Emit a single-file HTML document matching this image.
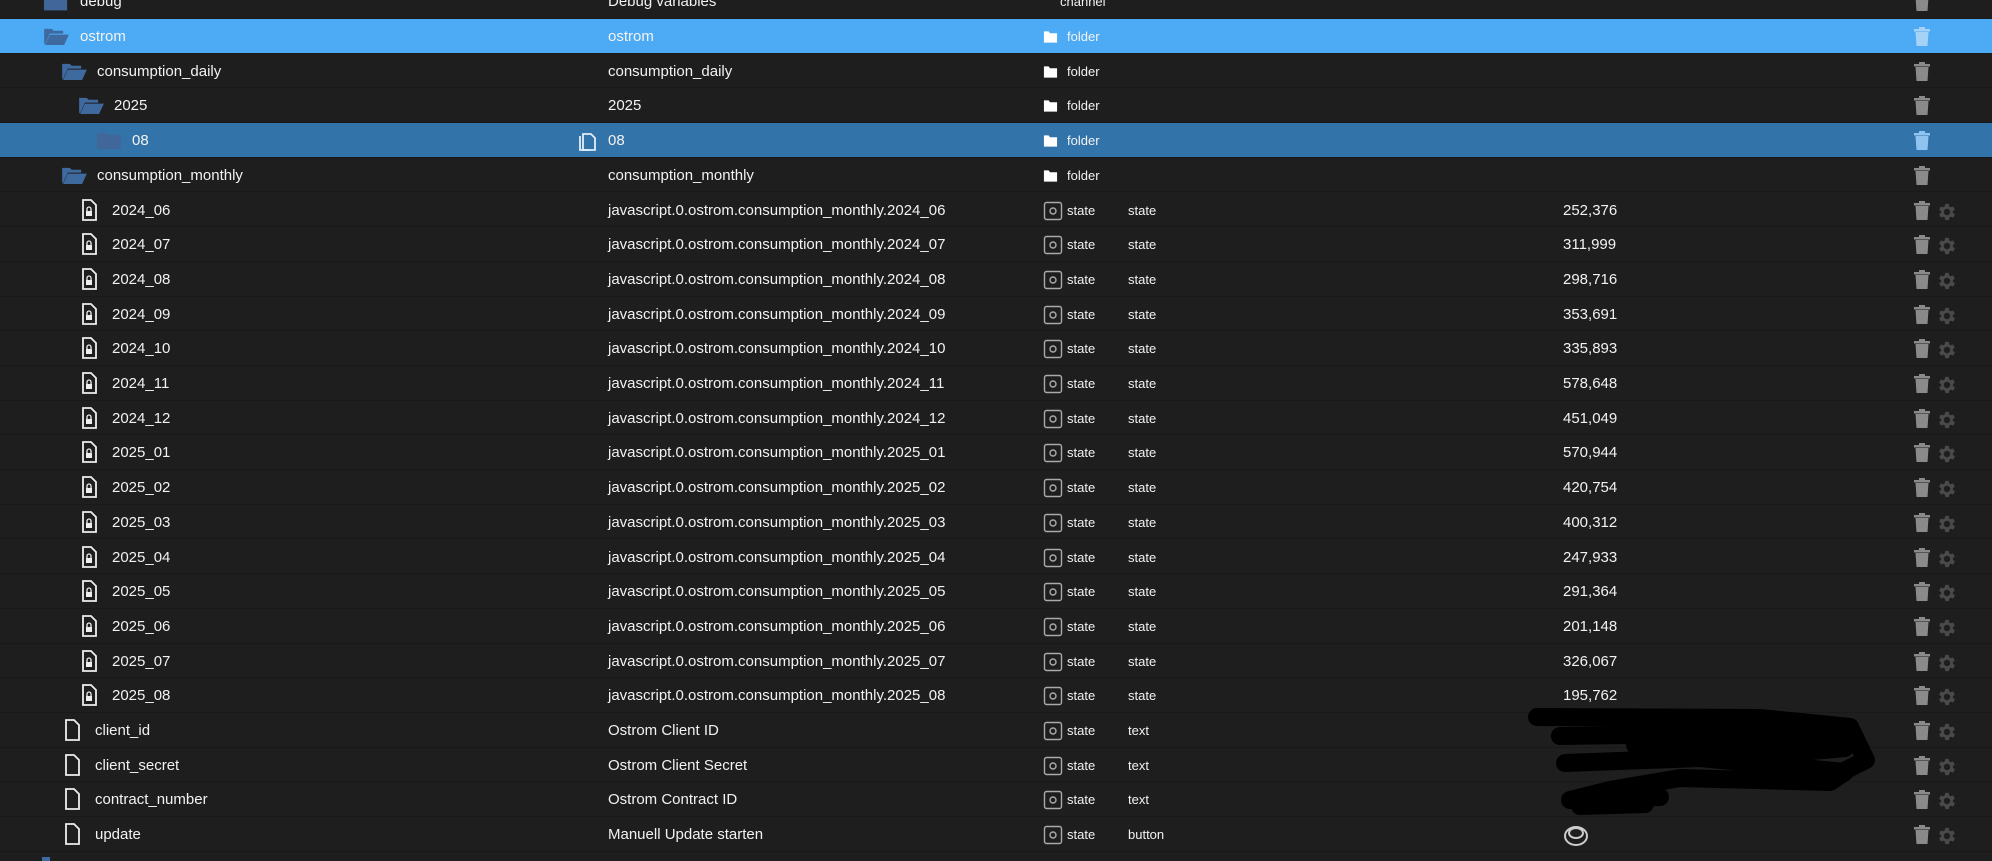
<!DOCTYPE html>
<html><head><meta charset="utf-8"><style>
html,body{margin:0;padding:0;background:#1e1e1e;width:1992px;height:861px;overflow:hidden;font-family:"Liberation Sans",sans-serif;color:#f2f2f2}
.r{position:absolute;left:0;width:1992px;height:34.7px;box-sizing:border-box;border-bottom:1px solid #191919;font-size:15px}
.r span,.r svg{position:absolute}
.t{top:9px;line-height:18px;white-space:nowrap}
.c2{left:608px}
.ti{left:1043px;top:8px}
.tt{left:1067px;font-size:13px}
.ro{left:1128px;font-size:13px}
.v{left:1563px}
.tr{left:1913px;top:8px}
.gr{left:1936px;top:8px}
.sel1{background:#4dabf5}
.sel2{background:#3273a9}
</style></head><body>
<svg width="0" height="0" style="position:absolute">
<defs>
<symbol id="fo" viewBox="0 0 28 20"><path d="M1 2h8l2 2h10v3H7L2 18H1z" fill="#3f6aa0"/><path d="M7 8h20l-5 11H2z" fill="#3f6aa0"/></symbol>
<symbol id="fc" viewBox="0 0 28 20"><path d="M1 2h8l2 2h15v15H1z" fill="#41679a"/></symbol>
<symbol id="ff" viewBox="0 0 16 16"><path d="M1 2h5l1.5 2H15v10H1z" fill="#fff"/></symbol>
<symbol id="st" viewBox="0 0 20 20"><rect x="1.5" y="1.5" width="17" height="17" rx="2" fill="none" stroke="#aaa" stroke-width="1.4"/><circle cx="10" cy="10" r="3" fill="none" stroke="#aaa" stroke-width="1.4"/></symbol>
<symbol id="fl" viewBox="0 0 16 22"><path d="M2 1h8l5 5v15H2z" fill="none" stroke="#eee" stroke-width="1.8"/><rect x="5" y="12" width="6" height="5" fill="#eee"/><path d="M6 12V10a2 2 0 0 1 4 0v2" fill="none" stroke="#eee" stroke-width="1.3"/></symbol>
<symbol id="fe" viewBox="0 0 16 22"><path d="M2 1h8l5 5v15H2z" fill="none" stroke="#eee" stroke-width="1.8"/></symbol>
<symbol id="tb" viewBox="0 0 18 20"><rect x="1" y="2" width="16" height="2.5" fill="currentColor"/><rect x="6" y="0" width="6" height="2" fill="currentColor"/><path d="M2.5 5h13l-1 14h-11z" fill="currentColor"/></symbol>
<symbol id="gg" viewBox="0 0 24 24"><path fill="#4a4a4a" d="M19.4 13a7.5 7.5 0 0 0 0-2l2.1-1.6-2-3.5-2.5 1a7 7 0 0 0-1.7-1L15 3.2h-4l-.4 2.7a7 7 0 0 0-1.7 1l-2.5-1-2 3.5L6.6 11a7.5 7.5 0 0 0 0 2l-2.1 1.6 2 3.5 2.5-1a7 7 0 0 0 1.7 1l.4 2.7h4l.4-2.7a7 7 0 0 0 1.7-1l2.5 1 2-3.5zM13 15.5a3.5 3.5 0 1 1 0-7 3.5 3.5 0 0 1 0 7z" transform="translate(-1 0)"/></symbol>
<symbol id="cp" viewBox="0 0 20 22"><path d="M6 4h8l4 4v12H6z" fill="none" stroke="#dfeefa" stroke-width="1.8"/><path d="M3 6v14h10" fill="none" stroke="#dfeefa" stroke-width="1.8"/></symbol>
</defs></svg>

<div class="r" style="top:-15.7px"><svg style="left:43px;top:8px" width="26" height="20"><use href="#fc"/></svg><span class="t" style="left:80px">debug</span><span class="t c2">Debug variables</span><span class="t tt" style="left:1060px">channel</span><svg class="tr" width="18" height="20" style="color:#8a8a8a"><use href="#tb"/></svg></div>

<div class="r sel1" style="top:19px"><svg style="left:43px;top:8px" width="27" height="19"><use href="#fo"/></svg><span class="t" style="left:80px">ostrom</span><span class="t c2">ostrom</span><svg class="ti" width="15" height="16" style="top:10px"><use href="#ff"/></svg><span class="t tt">folder</span><svg class="tr" width="18" height="20" style="color:#a6d2f7"><use href="#tb"/></svg></div>

<div class="r" style="top:53.7px"><svg style="left:61px;top:8px" width="27" height="19"><use href="#fo"/></svg><span class="t" style="left:97px">consumption_daily</span><span class="t c2">consumption_daily</span><svg class="ti" width="15" height="16" style="top:10px"><use href="#ff"/></svg><span class="t tt">folder</span><svg class="tr" width="18" height="20" style="color:#8a8a8a"><use href="#tb"/></svg></div>

<div class="r" style="top:88.4px"><svg style="left:78px;top:8px" width="27" height="19"><use href="#fo"/></svg><span class="t" style="left:114px">2025</span><span class="t c2">2025</span><svg class="ti" width="15" height="16" style="top:10px"><use href="#ff"/></svg><span class="t tt">folder</span><svg class="tr" width="18" height="20" style="color:#8a8a8a"><use href="#tb"/></svg></div>

<div class="r sel2" style="top:123.1px"><svg style="left:96px;top:8px" width="27" height="19"><use href="#fc"/></svg><span class="t" style="left:132px">08</span><svg style="left:577px;top:7px" width="20" height="22"><use href="#cp"/></svg><span class="t c2">08</span><svg class="ti" width="15" height="16" style="top:10px"><use href="#ff"/></svg><span class="t tt">folder</span><svg class="tr" width="18" height="20" style="color:#8fc4f0"><use href="#tb"/></svg></div>

<div class="r" style="top:157.8px"><svg style="left:61px;top:8px" width="27" height="19"><use href="#fo"/></svg><span class="t" style="left:97px">consumption_monthly</span><span class="t c2">consumption_monthly</span><svg class="ti" width="15" height="16" style="top:10px"><use href="#ff"/></svg><span class="t tt">folder</span><svg class="tr" width="18" height="20" style="color:#8a8a8a"><use href="#tb"/></svg></div>

<div class="r" style="top:192.5px"><svg style="left:81px;top:6px" width="16" height="22"><use href="#fl"/></svg><span class="t" style="left:112px">2024_06</span><span class="t c2">javascript.0.ostrom.consumption_monthly.2024_06</span><svg class="ti" width="20" height="20"><use href="#st"/></svg><span class="t tt">state</span><span class="t ro">state</span><span class="t v">252,376</span><svg class="tr" width="18" height="20" style="color:#8a8a8a"><use href="#tb"/></svg><svg class="gr" width="22" height="22"><use href="#gg"/></svg></div>
<div class="r" style="top:227.2px"><svg style="left:81px;top:6px" width="16" height="22"><use href="#fl"/></svg><span class="t" style="left:112px">2024_07</span><span class="t c2">javascript.0.ostrom.consumption_monthly.2024_07</span><svg class="ti" width="20" height="20"><use href="#st"/></svg><span class="t tt">state</span><span class="t ro">state</span><span class="t v">311,999</span><svg class="tr" width="18" height="20" style="color:#8a8a8a"><use href="#tb"/></svg><svg class="gr" width="22" height="22"><use href="#gg"/></svg></div>
<div class="r" style="top:261.9px"><svg style="left:81px;top:6px" width="16" height="22"><use href="#fl"/></svg><span class="t" style="left:112px">2024_08</span><span class="t c2">javascript.0.ostrom.consumption_monthly.2024_08</span><svg class="ti" width="20" height="20"><use href="#st"/></svg><span class="t tt">state</span><span class="t ro">state</span><span class="t v">298,716</span><svg class="tr" width="18" height="20" style="color:#8a8a8a"><use href="#tb"/></svg><svg class="gr" width="22" height="22"><use href="#gg"/></svg></div>
<div class="r" style="top:296.6px"><svg style="left:81px;top:6px" width="16" height="22"><use href="#fl"/></svg><span class="t" style="left:112px">2024_09</span><span class="t c2">javascript.0.ostrom.consumption_monthly.2024_09</span><svg class="ti" width="20" height="20"><use href="#st"/></svg><span class="t tt">state</span><span class="t ro">state</span><span class="t v">353,691</span><svg class="tr" width="18" height="20" style="color:#8a8a8a"><use href="#tb"/></svg><svg class="gr" width="22" height="22"><use href="#gg"/></svg></div>
<div class="r" style="top:331.3px"><svg style="left:81px;top:6px" width="16" height="22"><use href="#fl"/></svg><span class="t" style="left:112px">2024_10</span><span class="t c2">javascript.0.ostrom.consumption_monthly.2024_10</span><svg class="ti" width="20" height="20"><use href="#st"/></svg><span class="t tt">state</span><span class="t ro">state</span><span class="t v">335,893</span><svg class="tr" width="18" height="20" style="color:#8a8a8a"><use href="#tb"/></svg><svg class="gr" width="22" height="22"><use href="#gg"/></svg></div>
<div class="r" style="top:366px"><svg style="left:81px;top:6px" width="16" height="22"><use href="#fl"/></svg><span class="t" style="left:112px">2024_11</span><span class="t c2">javascript.0.ostrom.consumption_monthly.2024_11</span><svg class="ti" width="20" height="20"><use href="#st"/></svg><span class="t tt">state</span><span class="t ro">state</span><span class="t v">578,648</span><svg class="tr" width="18" height="20" style="color:#8a8a8a"><use href="#tb"/></svg><svg class="gr" width="22" height="22"><use href="#gg"/></svg></div>
<div class="r" style="top:400.7px"><svg style="left:81px;top:6px" width="16" height="22"><use href="#fl"/></svg><span class="t" style="left:112px">2024_12</span><span class="t c2">javascript.0.ostrom.consumption_monthly.2024_12</span><svg class="ti" width="20" height="20"><use href="#st"/></svg><span class="t tt">state</span><span class="t ro">state</span><span class="t v">451,049</span><svg class="tr" width="18" height="20" style="color:#8a8a8a"><use href="#tb"/></svg><svg class="gr" width="22" height="22"><use href="#gg"/></svg></div>
<div class="r" style="top:435.4px"><svg style="left:81px;top:6px" width="16" height="22"><use href="#fl"/></svg><span class="t" style="left:112px">2025_01</span><span class="t c2">javascript.0.ostrom.consumption_monthly.2025_01</span><svg class="ti" width="20" height="20"><use href="#st"/></svg><span class="t tt">state</span><span class="t ro">state</span><span class="t v">570,944</span><svg class="tr" width="18" height="20" style="color:#8a8a8a"><use href="#tb"/></svg><svg class="gr" width="22" height="22"><use href="#gg"/></svg></div>
<div class="r" style="top:470.1px"><svg style="left:81px;top:6px" width="16" height="22"><use href="#fl"/></svg><span class="t" style="left:112px">2025_02</span><span class="t c2">javascript.0.ostrom.consumption_monthly.2025_02</span><svg class="ti" width="20" height="20"><use href="#st"/></svg><span class="t tt">state</span><span class="t ro">state</span><span class="t v">420,754</span><svg class="tr" width="18" height="20" style="color:#8a8a8a"><use href="#tb"/></svg><svg class="gr" width="22" height="22"><use href="#gg"/></svg></div>
<div class="r" style="top:504.8px"><svg style="left:81px;top:6px" width="16" height="22"><use href="#fl"/></svg><span class="t" style="left:112px">2025_03</span><span class="t c2">javascript.0.ostrom.consumption_monthly.2025_03</span><svg class="ti" width="20" height="20"><use href="#st"/></svg><span class="t tt">state</span><span class="t ro">state</span><span class="t v">400,312</span><svg class="tr" width="18" height="20" style="color:#8a8a8a"><use href="#tb"/></svg><svg class="gr" width="22" height="22"><use href="#gg"/></svg></div>
<div class="r" style="top:539.5px"><svg style="left:81px;top:6px" width="16" height="22"><use href="#fl"/></svg><span class="t" style="left:112px">2025_04</span><span class="t c2">javascript.0.ostrom.consumption_monthly.2025_04</span><svg class="ti" width="20" height="20"><use href="#st"/></svg><span class="t tt">state</span><span class="t ro">state</span><span class="t v">247,933</span><svg class="tr" width="18" height="20" style="color:#8a8a8a"><use href="#tb"/></svg><svg class="gr" width="22" height="22"><use href="#gg"/></svg></div>
<div class="r" style="top:574.2px"><svg style="left:81px;top:6px" width="16" height="22"><use href="#fl"/></svg><span class="t" style="left:112px">2025_05</span><span class="t c2">javascript.0.ostrom.consumption_monthly.2025_05</span><svg class="ti" width="20" height="20"><use href="#st"/></svg><span class="t tt">state</span><span class="t ro">state</span><span class="t v">291,364</span><svg class="tr" width="18" height="20" style="color:#8a8a8a"><use href="#tb"/></svg><svg class="gr" width="22" height="22"><use href="#gg"/></svg></div>
<div class="r" style="top:608.9px"><svg style="left:81px;top:6px" width="16" height="22"><use href="#fl"/></svg><span class="t" style="left:112px">2025_06</span><span class="t c2">javascript.0.ostrom.consumption_monthly.2025_06</span><svg class="ti" width="20" height="20"><use href="#st"/></svg><span class="t tt">state</span><span class="t ro">state</span><span class="t v">201,148</span><svg class="tr" width="18" height="20" style="color:#8a8a8a"><use href="#tb"/></svg><svg class="gr" width="22" height="22"><use href="#gg"/></svg></div>
<div class="r" style="top:643.6px"><svg style="left:81px;top:6px" width="16" height="22"><use href="#fl"/></svg><span class="t" style="left:112px">2025_07</span><span class="t c2">javascript.0.ostrom.consumption_monthly.2025_07</span><svg class="ti" width="20" height="20"><use href="#st"/></svg><span class="t tt">state</span><span class="t ro">state</span><span class="t v">326,067</span><svg class="tr" width="18" height="20" style="color:#8a8a8a"><use href="#tb"/></svg><svg class="gr" width="22" height="22"><use href="#gg"/></svg></div>
<div class="r" style="top:678.3px"><svg style="left:81px;top:6px" width="16" height="22"><use href="#fl"/></svg><span class="t" style="left:112px">2025_08</span><span class="t c2">javascript.0.ostrom.consumption_monthly.2025_08</span><svg class="ti" width="20" height="20"><use href="#st"/></svg><span class="t tt">state</span><span class="t ro">state</span><span class="t v">195,762</span><svg class="tr" width="18" height="20" style="color:#8a8a8a"><use href="#tb"/></svg><svg class="gr" width="22" height="22"><use href="#gg"/></svg></div>

<div class="r" style="top:713px"><svg style="left:64px;top:6px" width="16" height="22"><use href="#fe"/></svg><span class="t" style="left:95px">client_id</span><span class="t c2">Ostrom Client ID</span><svg class="ti" width="20" height="20"><use href="#st"/></svg><span class="t tt">state</span><span class="t ro">text</span><svg class="tr" width="18" height="20" style="color:#8a8a8a"><use href="#tb"/></svg><svg class="gr" width="22" height="22"><use href="#gg"/></svg></div>
<div class="r" style="top:747.7px"><svg style="left:64px;top:6px" width="16" height="22"><use href="#fe"/></svg><span class="t" style="left:95px">client_secret</span><span class="t c2">Ostrom Client Secret</span><svg class="ti" width="20" height="20"><use href="#st"/></svg><span class="t tt">state</span><span class="t ro">text</span><svg class="tr" width="18" height="20" style="color:#8a8a8a"><use href="#tb"/></svg><svg class="gr" width="22" height="22"><use href="#gg"/></svg></div>
<div class="r" style="top:782.4px"><svg style="left:64px;top:6px" width="16" height="22"><use href="#fe"/></svg><span class="t" style="left:95px">contract_number</span><span class="t c2">Ostrom Contract ID</span><svg class="ti" width="20" height="20"><use href="#st"/></svg><span class="t tt">state</span><span class="t ro">text</span><svg class="tr" width="18" height="20" style="color:#8a8a8a"><use href="#tb"/></svg><svg class="gr" width="22" height="22"><use href="#gg"/></svg></div>
<div class="r" style="top:817.1px"><svg style="left:64px;top:6px" width="16" height="22"><use href="#fe"/></svg><span class="t" style="left:95px">update</span><span class="t c2">Manuell Update starten</span><svg class="ti" width="20" height="20"><use href="#st"/></svg><span class="t tt">state</span><span class="t ro">button</span><svg style="left:1563px;top:5px" width="26" height="26" viewBox="0 0 26 26"><ellipse cx="13" cy="14" rx="11" ry="9" fill="none" stroke="#ccc" stroke-width="2"/><ellipse cx="13" cy="11" rx="7" ry="5" fill="none" stroke="#ccc" stroke-width="2"/></svg><svg class="tr" width="18" height="20" style="color:#8a8a8a"><use href="#tb"/></svg><svg class="gr" width="22" height="22"><use href="#gg"/></svg></div>
<div style="position:absolute;left:42px;top:857px;width:8px;height:4px;background:#3f6aa0"></div>

<svg style="position:absolute;left:0;top:0" width="1992" height="861">
<g fill="none" stroke="#000" stroke-width="18" stroke-linecap="round" stroke-linejoin="round">
<path d="M1537 717 L1760 718 L1850 727 L1866 760 L1842 772"/>
<path d="M1560 736 L1700 734 L1840 738 L1845 748 L1800 752 L1635 745"/>
<path d="M1565 763 L1700 758 L1845 772 L1830 782 L1680 778 L1610 790 L1570 800 L1660 797"/>
<path d="M1580 806 L1645 804"/>
</g></svg>
</body></html>
